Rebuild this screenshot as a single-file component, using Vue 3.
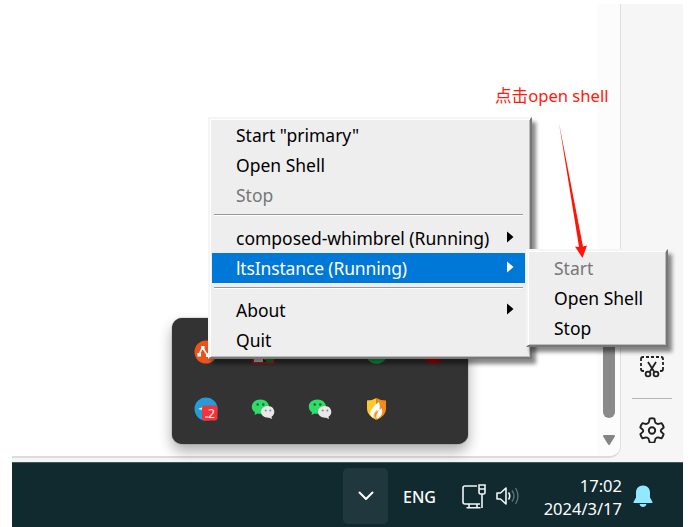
<script setup>
const mainMenu = [
  { label: 'Start "primary"' },
  { label: 'Open Shell' },
  { label: 'Stop', disabled: true },
  { separator: true },
  { label: 'composed-whimbrel (Running)', arrow: true },
  { label: 'ltsInstance (Running)', arrow: true, active: true },
  { separator: true },
  { label: 'About', arrow: true },
  { label: 'Quit' },
]
const subMenu = [
  { label: 'Start', disabled: true },
  { label: 'Open Shell' },
  { label: 'Stop' },
]
</script>

<template>
  <div class="screen">
    <div class="desktop">
      <main class="window">
        <div class="scrollbar">
          <div class="thumb"></div>
          <svg class="down" width="14" height="11" viewBox="0 0 14 11"><path d="M2 1h10l-5 8z" fill="#858585" stroke="#858585" stroke-width="2" stroke-linejoin="round" /></svg>
        </div>
      </main>
      <aside class="sidebar">
        <svg width="24" height="22" viewBox="0 0 24 22" fill="none" stroke="#202020" stroke-width="1.800">
          <path d="M1 5V3q0-2 2-2h1M6 1h3M11 1h3M16 1h3M21 1q2 0 2 2v1M23 6v3M23 11v2q0 2-2 2h-1M1 7v3M1 12v1q0 2 2 2h1" />
          <path d="M8 6l6 9.500M16 6l-6 9.500" />
          <circle cx="8" cy="18" r="2.400" /><circle cx="16" cy="18" r="2.400" />
        </svg>
        <hr />
        <svg width="26" height="26" viewBox="0 0 26 26" fill="none" stroke="#202020" stroke-width="1.900" stroke-linejoin="round">
          <path d="M10.600 1.700q2.400-.8 4.800 0l.7 3.200q.3 1 1.400 1.500l.5.3q.8.5 1.700.2l2.800-.8q1.800 2 2.200 4.400l-2.300 2q-.6.5-.6 1.300t.6 1.300l2.300 2q-.6 2.400-2.200 4.200l-3-.8q-.8-.3-1.600.1l-.6.4q-.9.5-1.100 1.400l-.8 2.900q-2.400.7-4.800 0l-.8-2.900q-.2-.9-1-1.400l-.7-.4q-.8-.4-1.600-.1l-3 .8Q1.900 19.500 1.300 17.100l2.300-2q.6-.5.6-1.300t-.6-1.300l-2.300-2Q1.700 8.100 3.500 6.100l2.800.8q.9.300 1.700-.2l.5-.3q1.100-.5 1.400-1.500z" />
          <circle cx="13" cy="13.500" r="3.200" />
        </svg>
      </aside>
    </div>

    <footer class="taskbar">
      <div class="chevron"><svg width="16" height="10" viewBox="0 0 16 10" fill="none" stroke="#fff" stroke-width="2" stroke-linecap="round" stroke-linejoin="round"><path d="M1.500 1.500L8 8l6.500-6.500" /></svg></div>
      <span class="lang">ENG</span>
      <svg class="net" width="24" height="25" viewBox="0 0 24 25" fill="none" stroke="#f1f5f5" stroke-width="1.600">
        <path d="M15 2H3q-2 0-2 2v14q0 2 2 2h15M7 20v3M15 20v3M4.500 23.700h14" />
        <path d="M17 1h6v7q0 2-1.500 2h-3Q17 10 17 8zM17 5h6M20 10v14" />
      </svg>
      <svg class="sound" width="24" height="20" viewBox="0 0 24 20" fill="none" stroke="#f1f5f5" stroke-width="1.600" stroke-linejoin="round">
        <path d="M1 7h3.500L10 2v16l-5.500-5H1zM12.500 6.500q2.500 3.500 0 7" />
        <path d="M16 4.500q4 5.500 0 11M19.500 2q5 8 0 16" stroke="#64757a" stroke-width="1.300" />
      </svg>
      <div class="clock"><span>17:02</span><span>2024/3/17</span></div>
      <svg class="bell" width="20" height="23" viewBox="0 0 20 23" fill="#91e9ff"><path d="M10 .5c-4.300 0-7 3-7 7v5L.5 17q-.3 1 .5 1h18q.8 0 .5-1L17 12.500v-5c0-4-2.700-7-7-7zM6.500 19h7q-.8 3-3.500 3t-3.500-3z" /></svg>
    </footer>

    <section class="tray">
      <svg width="24" height="24" viewBox="0 0 24 24"><circle cx="12" cy="12" r="11.500" fill="#ea541c" /><path d="M5 14.500L8.500 7.500L14 16" fill="none" stroke="#fff" stroke-width="1.500" /><path d="M3.500 13h3.500v3.500H3.500zM7 6h3.500v3.500H7zM12 13.500h4V17h-4z" fill="#fff" /></svg>
      <svg width="24" height="24" viewBox="0 0 24 24"><path d="M1.500 1h22v22.500h-22z" fill="#c0171d" /><path d="M3 2.500h11V22H3z" fill="#cacaca" /><path d="M15 2.500h7V22h-7z" fill="#168626" /><path d="M12 18l4 4h-4z" fill="#222" /></svg>
      <span></span>
      <svg width="24" height="24" viewBox="0 0 24 24"><circle cx="12.500" cy="12" r="11.500" fill="#19a34a" /></svg>
      <svg width="24" height="24" viewBox="0 0 24 24"><circle cx="12.500" cy="12" r="11.500" fill="#b80000" /></svg>
      <svg width="24" height="24" viewBox="0 0 24 24"><circle cx="12" cy="12" r="11.500" fill="#259bd7" /><path d="M4 12l5-2v3z" fill="#fff" /><rect x="8" y="8.500" width="15.500" height="15" rx="3" fill="#f5333b" /><text x="14" y="21" fill="#fff" font-size="12" font-family="Noto Sans">2</text><path d="M11 20h3" stroke="#fff" /></svg>
      <svg v-for="n in 2" :key="n" width="24" height="24" viewBox="0 0 24 24"><path d="M9.500 2.500C4.500 2.500.8 5.600.8 9.700c0 2.300 1.300 4.300 3.200 5.500L3.500 18l3-1.600c6 1.500 11.500-1.800 11.500-6.700 0-4-3.700-7.200-8.500-7.200z" fill="#2edc69" /><circle cx="6.700" cy="7.500" r="1.200" fill="#12632f" /><circle cx="12.300" cy="7.500" r="1.200" fill="#12632f" /><path d="M17 9c-4 0-7 2.500-7 6s3.500 6 8 5.700l3 1.400-.5-2.300C25.500 16.500 23.500 9 17 9z" fill="#e8e8e8" /><circle cx="14.700" cy="13.500" r="1" fill="#888" /><circle cx="19.300" cy="13.500" r="1" fill="#888" /></svg>
      <svg width="24" height="24" viewBox="0 0 24 24"><path d="M3 3.500Q8 3.500 12.500 1v22Q3 18.500 3 12z" fill="#ffc82d" /><path d="M12.500 1q4 2.500 9.500 2.500V12q0 7-9.500 11z" fill="#f88a16" /><path d="M15 5q-6 3.500-8.500 10-.8 4 3 6Q8.500 16.500 13 13q-2.500 5 0 9c4.500-2.500 6.500-6.500 4.500-11l-2 2Q16.500 9 15 5z" fill="#fff" /><path d="M15 13q-7 4-3 8 0-4 3-8z" fill="#f88a16" /></svg>
    </section>

    <nav v-for="(items, i) in [mainMenu, subMenu]" :key="i" class="menu" :class="i ? 'sub' : 'primary'">
      <template v-for="(item, j) in items" :key="j">
        <div v-if="item.separator" class="separator"></div>
        <div v-else class="item" :class="{ disabled: item.disabled, active: item.active }">
          <span>{{ item.label }}</span>
          <svg v-if="item.arrow" width="7" height="12" viewBox="0 0 7 12"><path d="M0 .5l6.500 5.500L0 11.500z" fill="currentColor" /></svg>
        </div>
      </template>
    </nav>

    <div class="note">点击open shell</div>
    <svg class="pointer" width="34" height="140" viewBox="0 0 34 140"><path d="M4 4L24 128L20 127.500L27.500 139L32 126.500L28 127.500Z" fill="#ff1507" /></svg>
  </div>
</template>

<style>
body { margin: 0; background: #fff; overflow: hidden; }
</style>

<style scoped>
.screen { box-sizing: border-box; width: 700px; height: 527px; padding: 4px 17px 0 12px; position: relative; overflow: hidden; display: flex; flex-direction: column; font-family: "Noto Sans", "Noto Sans CJK SC", sans-serif; background: #fff; }
svg { display: block; flex: none; }
.desktop { height: 458px; display: flex; background: #f6f6f6; }
.window { width: 608px; height: 452px; border-right: 1px solid #dedede; border-bottom: 2px solid #dcdcdc; border-radius: 0 0 12px 0; background: #fff; display: flex; justify-content: flex-end; }
.scrollbar { box-sizing: border-box; width: 23px; padding-left: 1px; background: #fcfcfc; display: flex; flex-direction: column; align-items: center; border-radius: 0 0 10px 0; }
.thumb { width: 12px; height: 114px; margin-top: 300px; border-radius: 7px; background: #8a8a8a; }
.down { margin-top: 17px; }
.sidebar { flex: 1; display: flex; flex-direction: column; align-items: center; padding: 352px 1px 0 0; }
.sidebar hr { width: 40px; height: 0; border: 0; border-top: 1px solid #b5b5b5; margin: 20px 0 18px; }
.taskbar { height: 65px; background: #102a30; box-shadow: inset 0 1px #465a5e; display: flex; align-items: flex-start; color: #fff; }
.chevron { width: 45px; height: 56px; margin: 6px 0 0 331px; border-radius: 5px; background: #20373e; display: flex; align-items: center; justify-content: center; }
.lang { width: 34px; margin: 23px 0 0 15px; font-size: 16px; line-height: 24px; font-weight: 500; }
.net { margin: 22px 0 0 25px; }
.sound { margin: 24px 0 0 10px; }
.clock { width: 82px; margin: 12px 0 0 20px; display: flex; flex-direction: column; align-items: flex-end; font-size: 16.500px; line-height: 23px; white-space: nowrap; }
.bell { margin: 23px 0 0 11px; }
.tray { position: absolute; left: 172px; top: 318px; box-sizing: border-box; width: 296px; height: 126px; padding: 22px 0 0 22px; border-radius: 10px; background: #333; box-shadow: 0 0 1px #222, 0 7px 14px #0005; display: grid; grid-template-columns: repeat(5, 56.800px); grid-template-rows: 57px 24px; }
.menu { position: absolute; box-sizing: border-box; background: #eee; border: 2px solid; border-color: #f5f5f5 #777 #777 #f5f5f5; box-shadow: inset 1px 1px #fff, inset -1px -1px #bbb, 4px 5px 4px #0007; }
.primary { left: 208px; top: 117px; width: 324px; height: 242px; padding: 1px 5px 0 2px; }
.sub { left: 526px; top: 249px; width: 142px; height: 98px; padding: 2px; }
.item { height: 30px; padding: 0 11px 0 24px; display: flex; align-items: center; justify-content: space-between; color: #000; font-size: 17.500px; line-height: 30px; white-space: nowrap; }
.item svg { margin-bottom: 2px; }
.active { background: #0078d7; color: #fff; }
.active span { letter-spacing: -.15px; }
.disabled { color: #777; }
.separator { height: 12px; margin: 0 2px; padding-top: 4px; box-sizing: border-box; }
.separator:nth-child(4) { height: 13px; }
.separator::before { content: ""; display: block; height: 1px; border-top: 1px solid #999; background: #fff; }
.note { position: absolute; left: 495px; top: 84px; font-size: 16.600px; line-height: 24px; color: #ff1a0d; white-space: nowrap; }
.pointer { position: absolute; left: 555px; top: 119px; }
</style>
